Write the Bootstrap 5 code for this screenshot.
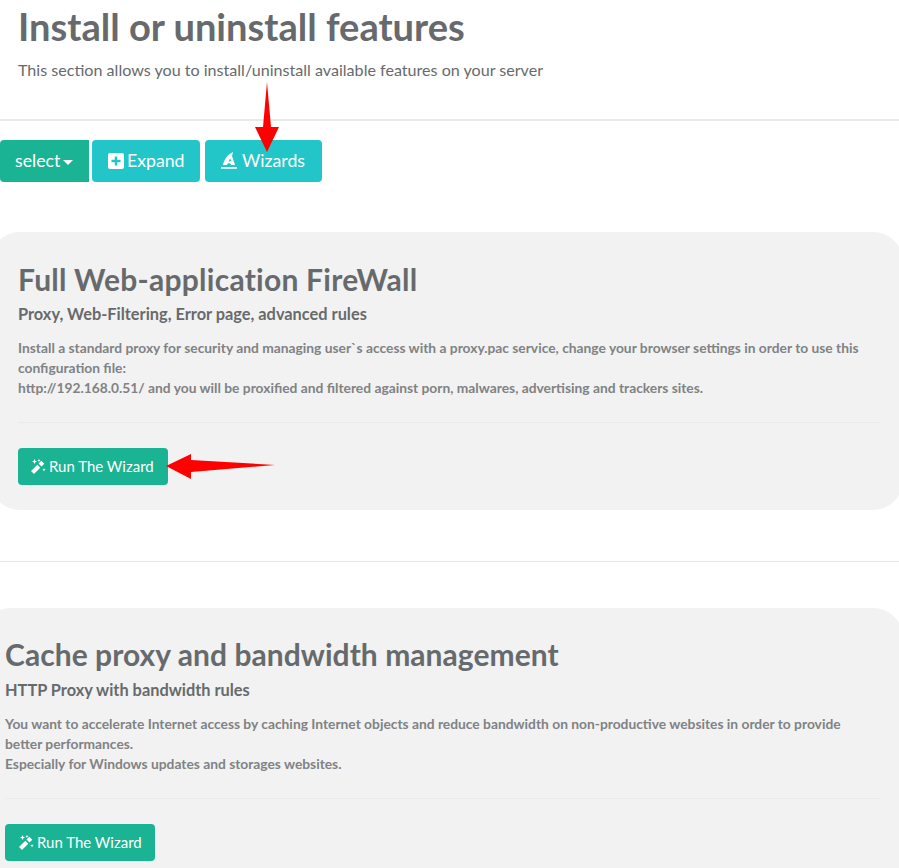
<!DOCTYPE html>
<html lang="en">
<head>
    <meta charset="UTF-8">
    <meta name="viewport" content="width=device-width, initial-scale=1">
    <title>Install or uninstall features</title>
    <link href="https://cdn.jsdelivr.net/npm/bootstrap@5.3.0/dist/css/bootstrap.min.css" rel="stylesheet">
    <style>
        html, body { height: 868px; overflow: hidden; }
        body { font-family: Lato, "Open Sans", sans-serif; color: #676a6c; background: #fff; position: relative; }
        .page-head { padding: 0 18px; height: 119px; }
        .page-head h1 { font-size: 38.1px; font-weight: 700; line-height: 40px; margin: 0; padding-top: 6px; color: #676a6c; }
        .page-head p { font-size: 16.1px; line-height: 20px; margin: 14px 0 0; }
        .head-rule { height: 2px; background: #e7eaec; }
        .tool-row { display: flex; padding-top: 19px; height: 111px; }
        .tool-btn { font-size: 17.7px; line-height: 24px; padding: 0 0 1px 16px; height: 42px; border: 0; color: #fff; border-radius: 4px; display: flex; align-items: center; }
        .tool-select { background: #1ab394; border-radius: 4px 0 0 4px; padding-left: 15px; width: 89px; gap: 3px; margin-right: 3px; }
        .tool-aqua { background: #23c6c8; }
        .tool-expand { width: 108px; gap: 3px; margin-right: 5px; }
        .tool-wizards { width: 117px; gap: 5px; }
        .caret-down { width: 0; height: 0; border-left: 5px solid transparent; border-right: 5px solid transparent; border-top: 5px solid #fff; margin-top: 3px; }
        .feature-box { background: #f2f2f2; border-radius: 30px; margin-right: -4px; }
        .feature-one { height: 278px; margin-left: -10px; padding: 29px 23px 0 28px; }
        .feature-two { height: 300px; margin-left: -20px; padding: 28px 23px 0 25px; margin-top: 46px; }
        .feature-box h2 { font-size: 30px; line-height: 36px; font-weight: 700; margin: 0; color: #676a6c; }
        .feature-one h2 { letter-spacing: .25px; }
        .feature-two h2 { letter-spacing: .05px; }
        .feature-box h3 { font-size: 16.35px; line-height: 20px; font-weight: 700; margin: 7px 0 0; color: #676a6c; }
        .feature-two h3 { margin-top: 8px; }
        .feature-box p { font-size: 13.8px; line-height: 20px; font-weight: 700; margin: 14px 0 0; color: #808284; }
        .box-rule { height: 1px; background: #ebebeb; margin: 24px 0 25px; }
        .wizard-btn { background: #1ab394; color: #fff; border: 0; border-radius: 4px; font-size: 15px; line-height: 20px; height: 37px; width: 150px; display: flex; align-items: center; gap: 3px; padding: 0 0 2px 12px; }
        .feature-two .wizard-btn { padding-left: 13px; }
        .wizard-btn svg { margin-top: 2px; }
        .section-rule { height: 1px; background: #e7e7e7; margin-top: 51px; }
        .red-arrow { position: absolute; left: 0; top: 0; pointer-events: none; }
    </style>
</head>
<body>

    <div class="page-head">
        <h1>Install or uninstall features</h1>
        <p>This section allows you to install/uninstall available features on your server</p>
    </div>
    <div class="head-rule"></div>

    <div class="tool-row">
        <button type="button" class="tool-btn tool-select">select<span class="caret-down"></span></button>
        <button type="button" class="tool-btn tool-aqua tool-expand">
            <svg width="16" height="16" viewBox="0 0 16 16"><path fill="#fff" fill-rule="evenodd" d="M2 0h12a2 2 0 0 1 2 2v12a2 2 0 0 1-2 2H2a2 2 0 0 1-2-2V2a2 2 0 0 1 2-2zm4.800 3.500v3.300H3.500v2.400h3.300v3.300h2.400V9.200h3.300V6.800H9.200V3.500z"/></svg>
            Expand
        </button>
        <button type="button" class="tool-btn tool-aqua tool-wizards">
            <svg width="16" height="17" viewBox="0 0 16 17"><path fill="#fff" fill-rule="evenodd" d="M2 13C3 8 6 3 12 0l-1 4 3 9h-4c0-2.200-4-2.200-4 0zM9 6.500 7.500 9.500l2.800-.5zM0 15h16v1.700H0z"/></svg>
            Wizards
        </button>
    </div>

    <div class="feature-box feature-one">
        <h2>Full Web-application FireWall</h2>
        <h3>Proxy, Web-Filtering, Error page, advanced rules</h3>
        <p>Install a standard proxy for security and managing user`s access with a proxy.pac service, change your browser settings in order to use this configuration file:<br>http://192.168.0.51/ and you will be proxified and filtered against porn, malwares, advertising and trackers sites.</p>
        <div class="box-rule"></div>
        <button type="button" class="wizard-btn">
            <svg width="16" height="16" viewBox="0 0 16 16"><path fill="none" stroke="#fff" stroke-width="4.200" d="M2.500 13.500 8.800 7.200M10 6l2.800-2.800"/><path fill="#fff" d="M4.500 0l.8 1.700L7 2.500l-1.700.8L4.500 5l-.8-1.700L2 2.500l1.700-.8zM9 0l.5 1 1 .5-1 .5L9 3l-.5-1-1-.5 1-.5zM14 9l.5 1.200 1.200.5-1.200.5L14 12.500l-.5-1.300-1.200-.5 1.200-.5z"/></svg>
            Run The Wizard
        </button>
    </div>

    <div class="section-rule"></div>

    <div class="feature-box feature-two">
        <h2>Cache proxy and bandwidth management</h2>
        <h3>HTTP Proxy with bandwidth rules</h3>
        <p>You want to accelerate Internet access by caching Internet objects and reduce bandwidth on non-productive websites in order to provide better performances.<br>Especially for Windows updates and storages websites.</p>
        <div class="box-rule"></div>
        <button type="button" class="wizard-btn">
            <svg width="16" height="16" viewBox="0 0 16 16"><path fill="none" stroke="#fff" stroke-width="4.200" d="M2.500 13.500 8.800 7.200M10 6l2.800-2.800"/><path fill="#fff" d="M4.500 0l.8 1.700L7 2.500l-1.700.8L4.500 5l-.8-1.700L2 2.500l1.700-.8zM9 0l.5 1 1 .5-1 .5L9 3l-.5-1-1-.5 1-.5zM14 9l.5 1.200 1.200.5-1.200.5L14 12.500l-.5-1.300-1.200-.5 1.200-.5z"/></svg>
            Run The Wizard
        </button>
    </div>

    <svg class="red-arrow" width="899" height="868" viewBox="0 0 899 868">
        <polygon fill="#f00" points="267,82 271,127 279,127 267,152 255,127 263,127"/>
        <polygon fill="#f00" points="166,466 191,454 191,460 275,465 191,472 191,479"/>
    </svg>

</body>
</html>
